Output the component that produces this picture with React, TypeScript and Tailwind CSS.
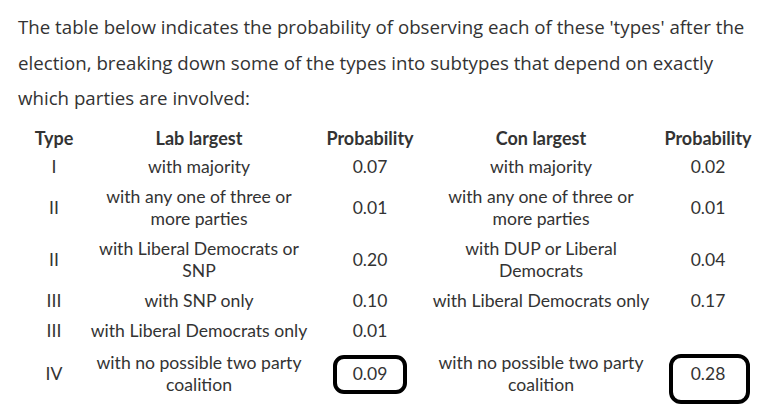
const rows = [
  { type: "I", lab: ["with majority"], p1: "0.07", con: ["with majority"], p2: "0.02", h: "h-[30px]" },
  { type: "II", lab: ["with any one of three or", "more parties"], p1: "0.01", con: ["with any one of three or", "more parties"], p2: "0.01", h: "h-[52px]" },
  { type: "II", lab: ["with Liberal Democrats or", "SNP"], p1: "0.20", con: ["with DUP or Liberal", "Democrats"], p2: "0.04", h: "h-[52px]" },
  { type: "III", lab: ["with SNP only"], p1: "0.10", con: ["with Liberal Democrats only"], p2: "0.17", h: "h-[30px]" },
  { type: "III", lab: ["with Liberal Democrats only"], p1: "0.01", con: [], p2: "", h: "h-[30px]" },
]

const Lines = ({ lines }: { lines: string[] }) => (
  <>
    {lines.map((l, i) => (
      <div key={i} className="whitespace-nowrap">{l}</div>
    ))}
  </>
)

const App = () => {
  return (
    <div className="w-[782px] h-[418px] bg-white text-[#333] overflow-hidden">
      <p className="pt-[9px] pl-[18px] font-['Open_Sans',sans-serif] text-[18.7px] leading-[35.5px] whitespace-nowrap">
        The table below indicates the probability of observing each of these 'types' after the<br />
        election, breaking down some of the types into subtypes that depend on exactly<br />
        which parties are involved:
      </p>
      <table className="mt-[8px] ml-[18px] w-[748px] table-fixed border-collapse font-['Lato',sans-serif] text-[17.6px] leading-[22px] text-center">
        <colgroup>
          <col className="w-[72px]" />
          <col className="w-[218px]" />
          <col className="w-[124px]" />
          <col className="w-[218px]" />
          <col className="w-[116px]" />
        </colgroup>
        <thead>
          <tr className="h-[28px] text-[18px] font-bold">
            <th>Type</th>
            <th>Lab largest</th>
            <th>Probability</th>
            <th>Con largest</th>
            <th>Probability</th>
          </tr>
        </thead>
        <tbody>
          {rows.map((r, i) => (
            <tr key={i} className={r.h}>
              <td>{r.type}</td>
              <td><Lines lines={r.lab} /></td>
              <td className="text-[17.5px]">{r.p1}</td>
              <td><Lines lines={r.con} /></td>
              <td className="text-[17.5px]">{r.p2}</td>
            </tr>
          ))}
          <tr className="h-[56px]">
            <td>IV</td>
            <td><Lines lines={["with no possible two party", "coalition"]} /></td>
            <td className="text-[17.5px]">
              <span className="relative inline-block">
                0.09
                <span className="absolute left-[-20px] top-[-8px] w-[74px] h-[39px] border-4 border-black rounded-[11px]" />
              </span>
            </td>
            <td><Lines lines={["with no possible two party", "coalition"]} /></td>
            <td className="text-[17.5px]">
              <span className="relative inline-block">
                0.28
                <span className="absolute left-[-22px] top-[-9px] w-[81px] h-[50px] border-4 border-black rounded-[12px]" />
              </span>
            </td>
          </tr>
        </tbody>
      </table>
    </div>
  )
}

export default App
